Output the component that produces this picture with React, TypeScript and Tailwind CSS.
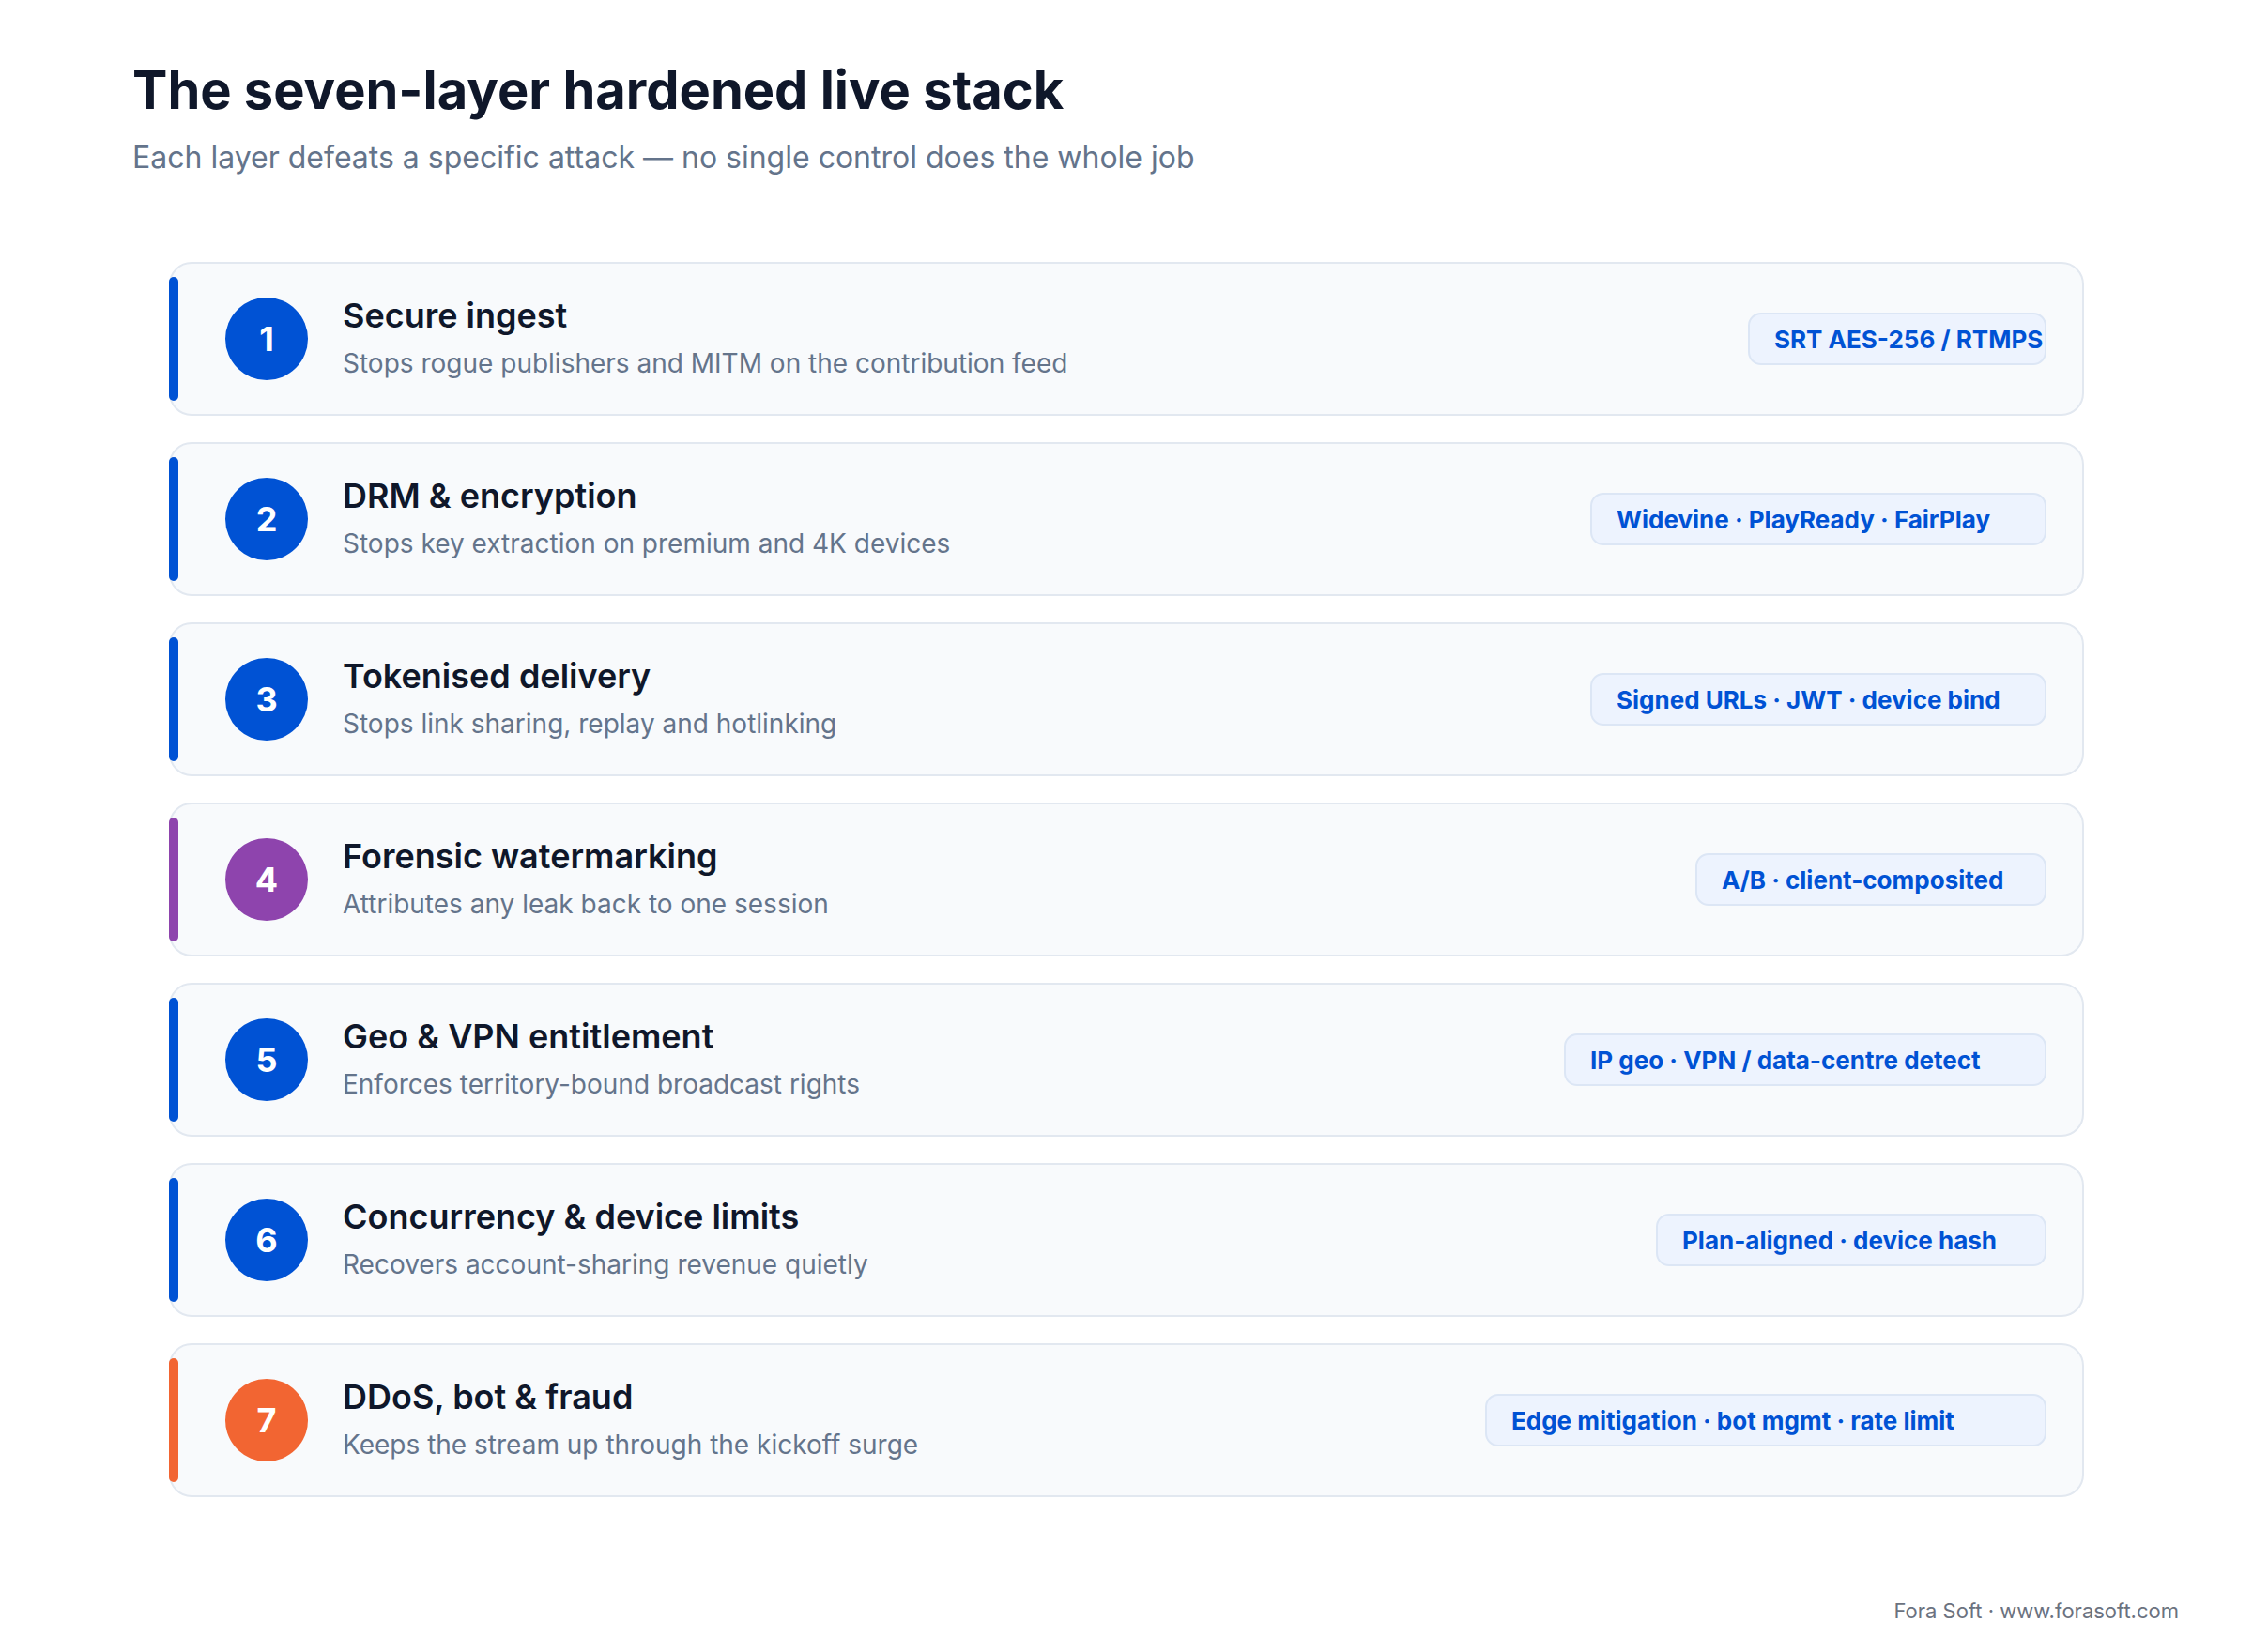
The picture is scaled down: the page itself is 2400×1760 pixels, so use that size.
import React from 'react';

interface Layer {
    n: number;
    title: string;
    desc: string;
    tag: string;
    tagWidth: string;
    accent: 'blue' | 'purple' | 'orange';
}

const layers: Layer[] = [
    { n: 1, title: 'Secure ingest', desc: 'Stops rogue publishers and MITM on the contribution feed', tag: 'SRT AES-256 / RTMPS', tagWidth: 'w-[318px]', accent: 'blue' },
    { n: 2, title: 'DRM & encryption', desc: 'Stops key extraction on premium and 4K devices', tag: 'Widevine · PlayReady · FairPlay', tagWidth: 'w-[486px]', accent: 'blue' },
    { n: 3, title: 'Tokenised delivery', desc: 'Stops link sharing, replay and hotlinking', tag: 'Signed URLs · JWT · device bind', tagWidth: 'w-[486px]', accent: 'blue' },
    { n: 4, title: 'Forensic watermarking', desc: 'Attributes any leak back to one session', tag: 'A/B · client-composited', tagWidth: 'w-[374px]', accent: 'purple' },
    { n: 5, title: 'Geo & VPN entitlement', desc: 'Enforces territory-bound broadcast rights', tag: 'IP geo · VPN / data-centre detect', tagWidth: 'w-[514px]', accent: 'blue' },
    { n: 6, title: 'Concurrency & device limits', desc: 'Recovers account-sharing revenue quietly', tag: 'Plan-aligned · device hash', tagWidth: 'w-[416px]', accent: 'blue' },
    { n: 7, title: 'DDoS, bot & fraud', desc: 'Keeps the stream up through the kickoff surge', tag: 'Edge mitigation · bot mgmt · rate limit', tagWidth: 'w-[598px]', accent: 'orange' },
];

const accentBg = {
    blue: 'bg-[#0052d4]',
    purple: 'bg-[#8e44ad]',
    orange: 'bg-[#f26532]',
};

const LayerCard: React.FC<{ layer: Layer }> = ({ layer }) => (
    <div className="flex items-center h-[164px] rounded-[24px] border-2 border-[#e2e8f0] bg-[#f8fafc]">
        <div className={`w-[10px] self-stretch my-[14px] -ml-[2px] rounded-full ${accentBg[layer.accent]}`} />
        <div className={`ml-[50px] w-[88px] h-[88px] shrink-0 rounded-full flex items-center justify-center text-white text-[36px] font-bold leading-none ${accentBg[layer.accent]}`}>
            {layer.n}
        </div>
        <div className="ml-[37px] flex flex-col pb-[3px]">
            <span className="text-[36px] leading-[44px] font-semibold text-[#0f172a]">{layer.title}</span>
            <span className="mt-[11px] text-[28px] leading-[36px] text-[#64748b]">{layer.desc}</span>
        </div>
        <div className={`ml-auto mr-[38px] h-[56px] shrink-0 flex items-center pl-[26px] rounded-[14px] border-2 border-[#dce6f5] bg-[#edf3fe] ${layer.tagWidth}`}>
            <span className="whitespace-nowrap text-[26px] font-bold text-[#0052d4]">{layer.tag}</span>
        </div>
    </div>
);

export default function App() {
    return (
        <div className="w-[2400px] h-[1760px] bg-white flex flex-col font-['Inter',sans-serif]">
            <div className="pl-[141px] pt-[68px]">
                <h1 className="text-[56px] leading-none font-bold text-[#0f172a]">The seven-layer hardened live stack</h1>
                <p className="mt-[28px] text-[32px] leading-none text-[#64748b]">
                    Each layer defeats a specific attack — no single control does the whole job
                </p>
            </div>

            <div className="ml-[180px] w-[2040px] mt-[95px] flex flex-col gap-[28px]">
                {layers.map((l) => (
                    <LayerCard key={l.n} layer={l} />
                ))}
            </div>

            <div className="mt-[110px] pr-[79px] flex justify-end">
                <span className="text-[22px] leading-none text-[#6b7280]">Fora Soft · www.forasoft.com</span>
            </div>
        </div>
    );
}
